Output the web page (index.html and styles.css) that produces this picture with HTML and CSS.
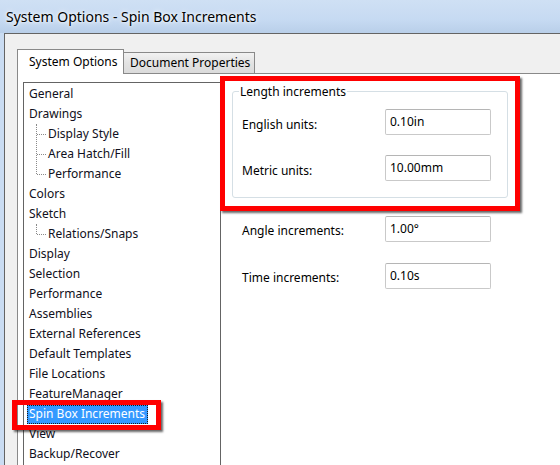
FILE: index.html
```html
<!DOCTYPE html>
<html lang="en">
<head>
  <meta charset="UTF-8">
  <title>System Options - Spin Box Increments</title>
  <link rel="stylesheet" href="styles.css">
</head>
<body>
  <div class="titlebar">System Options - Spin Box Increments</div>
  <div class="client">
    <div class="tabs">
      <div class="tab active">System Options</div>
      <div class="tab">Document Properties</div>
    </div>
    <div class="panel">
      <ul class="tree">
        <li>General</li>
        <li>Drawings</li>
        <li class="sub">
          <ul>
            <li>Display Style</li>
            <li>Area Hatch/Fill</li>
            <li>Performance</li>
          </ul>
        </li>
        <li>Colors</li>
        <li>Sketch</li>
        <li class="sub">
          <ul>
            <li>Relations/Snaps</li>
          </ul>
        </li>
        <li>Display</li>
        <li>Selection</li>
        <li>Performance</li>
        <li>Assemblies</li>
        <li>External References</li>
        <li>Default Templates</li>
        <li>File Locations</li>
        <li>FeatureManager</li>
        <li><span class="sel">Spin Box Increments</span></li>
        <li>View</li>
        <li>Backup/Recover</li>
      </ul>

      <div class="page">
        <div class="mark">
          <div class="group">
            <span class="legend">Length increments</span>
            <div class="row">
              <label>English units:</label>
              <input type="text" value="0.10in">
            </div>
            <div class="row">
              <label>Metric units:</label>
              <input type="text" value="10.00mm">
            </div>
          </div>
        </div>
        <div class="row loose">
          <label>Angle increments:</label>
          <input type="text" value="1.00°">
        </div>
        <div class="row loose second">
          <label>Time increments:</label>
          <input type="text" value="0.10s">
        </div>
      </div>
    </div>
  </div>
</body>
</html>
```

FILE: styles.css
```css
html, body {
  margin: 0;
  height: 100%;
  overflow: hidden;
}
body {
  font-family: "Noto Sans", "Open Sans", sans-serif;
  font-size: 12px;
  color: #000;
  background: linear-gradient(to right, #cadcf2, #c4d9f3 60%, #cbdff6);
}
.titlebar {
  height: 33px;
  line-height: 33px;
  padding-left: 6px;
  font-size: 14px;
  color: #000;
  white-space: nowrap;
  text-shadow: 0 0 6px #fff, 0 0 3px #fff;
  background: linear-gradient(to bottom, #cfe0f4 0%, #c6daf2 60%, #b9cfe9 100%);
}
.client {
  box-sizing: border-box;
  display: flex;
  flex-direction: column;
  height: calc(100% - 33px);
  margin-left: 4px;
  overflow: hidden;
  background: #f0f0f0;
  border-left: 1px solid #646464;
  border-top: 1px solid #646464;
  padding: 15px 0 0 12px;
}
.tabs {
  display: flex;
  align-items: flex-end;
  height: 24px;
  flex: none;
}
.tab {
  box-sizing: border-box;
  height: 21px;
  line-height: 19px;
  padding: 0 6px;
  white-space: nowrap;
  border: 1px solid #898989;
  border-bottom: none;
  margin-left: -1px;
  background: linear-gradient(to bottom, #f2f2f2, #e3e3e3 50%, #dbdbdb);
}
.tab.active {
  position: relative;
  z-index: 2;
  margin-left: 0;
  width: 107px;
  height: 25px;
  line-height: 24px;
  margin-bottom: -1px;
  padding-left: 11px;
  background: #fff;
}
.tab:last-child {
  width: 132px;
}
.panel {
  flex: 1;
  display: flex;
  align-items: flex-start;
  background: #fff;
  border-top: 1px solid #898989;
  border-left: 1px solid #898989;
}
.tree {
  list-style: none;
  box-sizing: border-box;
  flex: none;
  width: 198px;
  height: 400px;
  margin: 8px 0 0 5px;
  padding: 1px 0 0;
  border: 1px solid #646464;
}
.tree li {
  height: 20px;
  line-height: 20px;
  padding-left: 5px;
  color: #101020;
  white-space: nowrap;
}
.tree li.sub {
  height: auto;
  padding: 0;
}
.tree .sub ul {
  list-style: none;
  margin: 0;
  padding: 0;
  position: relative;
}
.tree .sub ul::before {
  content: "";
  position: absolute;
  left: 12px;
  top: 0;
  bottom: 10px;
  border-left: 1px dotted #8a8a8a;
}
.tree .sub li {
  position: relative;
  padding-left: 24px;
}
.tree .sub li::before {
  content: "";
  position: absolute;
  left: 13px;
  top: 10px;
  width: 9px;
  border-top: 1px dotted #8a8a8a;
}
.sel {
  position: relative;
  display: inline-block;
  height: 19px;
  line-height: 18px;
  margin-left: -2px;
  padding: 0 3px 0 2px;
  color: #fff;
  background: #3399ff;
  outline: 1px dotted #1a1a1a;
  outline-offset: -1px;
}
.sel::after {
  content: "";
  position: absolute;
  left: -15px;
  right: -13px;
  top: -5px;
  bottom: -6px;
  border: 5px solid #ff0000;
  box-shadow: 2px 2px 2px rgba(0, 0, 0, 0.6);
}
.mark {
  box-sizing: border-box;
  width: 300px;
  height: 135px;
  margin: 2px 0 0 -1px;
  padding: 10px 7px 0;
  border: 5px solid #ff0000;
  box-shadow: 2px 2px 2px rgba(0, 0, 0, 0.6);
}
.group {
  box-sizing: border-box;
  height: 107px;
  padding: 18px 0 0 9px;
  border: 1px solid #d5dfe5;
  border-radius: 3px;
}
.legend {
  display: block;
  width: max-content;
  margin: -26px 0 9px -3px;
  padding: 0 1px;
  line-height: 16px;
  background: #fff;
}
.row {
  display: grid;
  grid-template-columns: 143px 106px;
  align-items: center;
  height: 26px;
}
.row + .row {
  margin-top: 20px;
}
.row.loose {
  padding-left: 21px;
  margin-top: 5px;
}
.row.loose.second {
  margin-top: 21px;
}
label {
  padding-top: 4px;
  white-space: nowrap;
}
.loose label {
  padding-top: 3px;
}
input {
  box-sizing: border-box;
  width: 106px;
  height: 26px;
  margin: 0;
  padding: 0 4px 1px;
  font: inherit;
  font-size: 12px;
  color: #000;
  border: 1px solid #c9c9c9;
  border-top-color: #b5b5b5;
  border-radius: 2px;
  outline: none;
}
```
